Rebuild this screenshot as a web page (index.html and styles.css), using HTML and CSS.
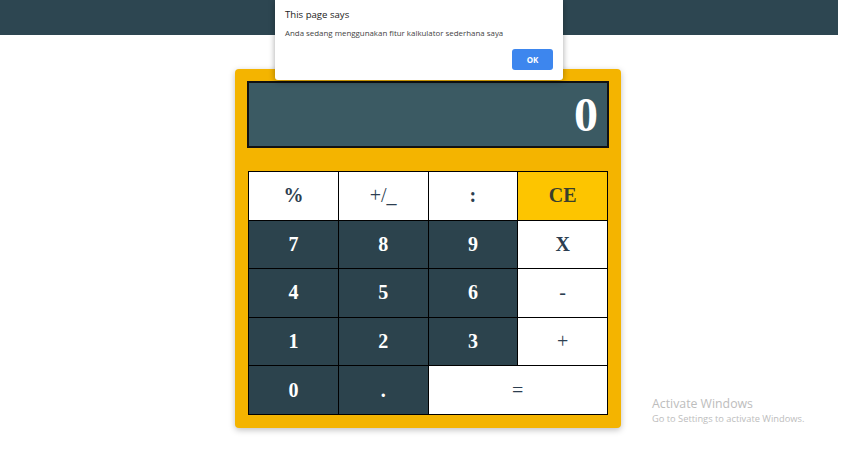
FILE: index.html
```html
<!DOCTYPE html>
<html>
<head>
<meta charset="utf-8">
<link rel="stylesheet" href="styles.css">
</head>
<body>
<header class="topbar"></header>
<main class="page">
  <div class="calc">
    <div class="display">0</div>
    <table class="keys">
      <tr><td class="light">%</td><td class="light thin">+/_</td><td class="light">:</td><td class="ce">CE</td></tr>
      <tr><td class="dark">7</td><td class="dark">8</td><td class="dark">9</td><td class="light">X</td></tr>
      <tr><td class="dark">4</td><td class="dark">5</td><td class="dark">6</td><td class="light thin">-</td></tr>
      <tr><td class="dark">1</td><td class="dark">2</td><td class="dark">3</td><td class="light thin">+</td></tr>
      <tr><td class="dark">0</td><td class="dark">.</td><td class="light thin" colspan="2">=</td></tr>
    </table>
  </div>
</main>
<div class="dialog">
  <div class="dialog-title">This page says</div>
  <div class="dialog-msg">Anda sedang menggunakan fitur kalkulator sederhana saya</div>
  <div class="dialog-actions"><button class="ok">OK</button></div>
</div>
<div class="watermark">
  <div class="wm-title">Activate Windows</div>
  <div class="wm-sub">Go to Settings to activate Windows.</div>
</div>
</body>
</html>
```

FILE: styles.css
```css
html, body {
  margin: 0;
  padding: 0;
  background: #ffffff;
  width: 864px;
  height: 471px;
  overflow: hidden;
}
body {
  font-family: "Liberation Serif", serif;
}
.topbar {
  width: 838px;
  height: 35px;
  background: #2d4651;
}
.page {
  display: flex;
  justify-content: flex-start;
  padding: 34px 0 0 235px;
}
.calc {
  width: 360px;
  padding: 12px 13px 13px 13px;
  background: #f4b400;
  border-radius: 4px;
  box-shadow: 0 2px 6px rgba(0,0,0,0.25);
}
.display {
  box-sizing: border-box;
  width: 362px;
  margin-left: -1px;
  height: 67px;
  border: 2px solid #111;
  background: #3b5a63;
  color: #fff;
  font-weight: bold;
  font-size: 48px;
  line-height: 63px;
  text-align: right;
  padding-right: 9px;
}
.keys {
  margin-top: 23px;
  border-collapse: collapse;
  width: 360px;
  table-layout: fixed;
}
.keys td {
  border: 1px solid #000;
  height: 47.6px;
  padding: 0;
  text-align: center;
  font-weight: bold;
  font-size: 20px;
}
.keys td.light {
  background: #ffffff;
  color: #2c3e50;
}
.keys td.thin {
  font-weight: normal;
}
.keys td.dark {
  background: #2c434d;
  color: #ffffff;
}
.keys td.ce {
  background: #fdc500;
  color: #3a3f2c;
}
.dialog {
  position: absolute;
  left: 275px;
  top: 0;
  width: 288px;
  height: 80px;
  box-sizing: border-box;
  background: #fff;
  border-radius: 0 0 3px 3px;
  box-shadow: 0 1px 6px rgba(0,0,0,0.35);
  font-family: "Open Sans", "Noto Sans", sans-serif;
  padding: 8px 10px 0 10px;
}
.dialog-title {
  font-size: 9.6px;
  color: #222;
  line-height: 14px;
}
.dialog-msg {
  font-size: 7.9px;
  color: #444;
  margin-top: 5px;
  line-height: 12px;
}
.dialog-actions {
  display: flex;
  justify-content: flex-end;
  margin-top: 10px;
}
.ok {
  width: 41px;
  height: 21px;
  border: none;
  border-radius: 3px;
  background: #3d86ee;
  color: #fff;
  font-family: "Open Sans", "Noto Sans", sans-serif;
  font-size: 8px;
  font-weight: bold;
  padding: 0;
}
.watermark {
  position: absolute;
  left: 652px;
  top: 396px;
  font-family: "Open Sans", "Noto Sans", sans-serif;
  color: #bdbdbd;
}
.wm-title {
  font-size: 12.3px;
  line-height: 16px;
}
.wm-sub {
  font-size: 9.3px;
  line-height: 13px;
}
```
